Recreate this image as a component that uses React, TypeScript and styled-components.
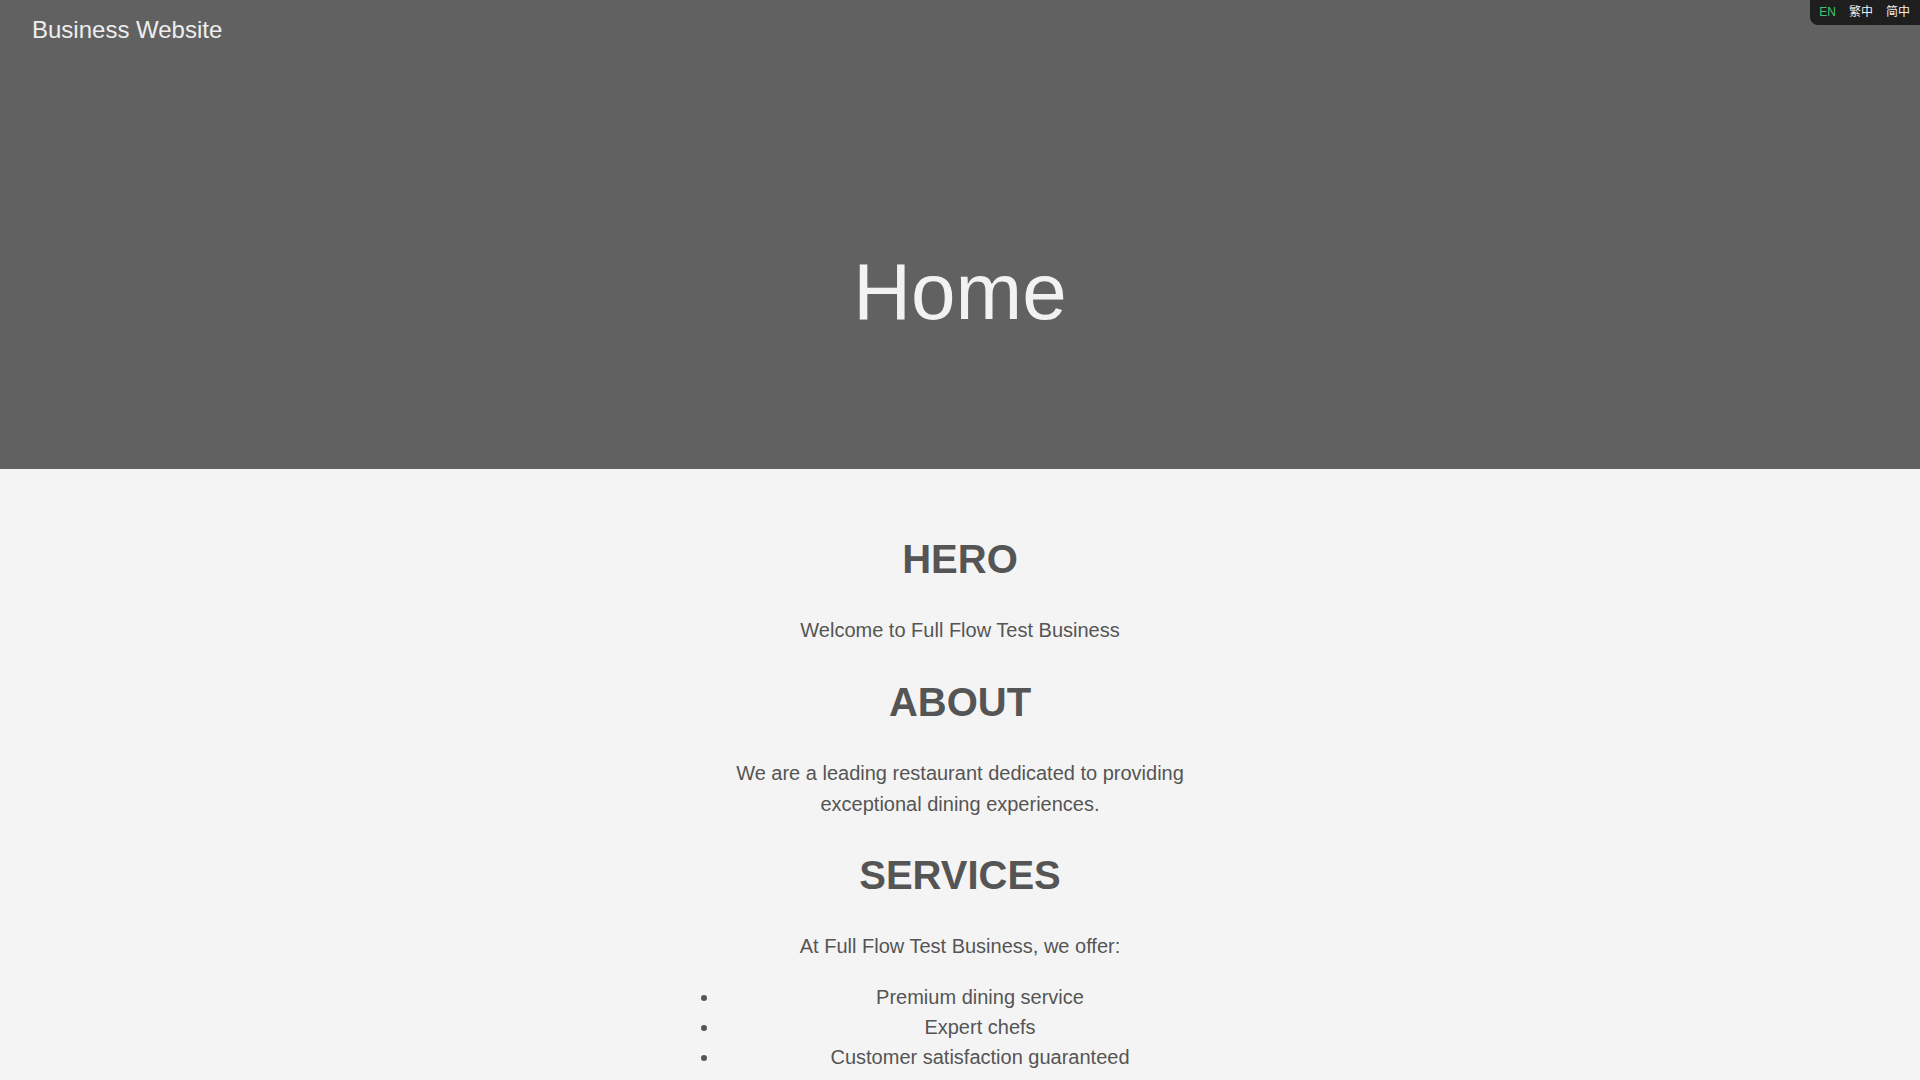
import React from "react";
import styled, { createGlobalStyle } from "styled-components";

const GlobalStyle = createGlobalStyle`
  html, body {
    margin: 0;
    padding: 0;
    background: #f4f4f4;
  }
  body {
    font-family: "Liberation Sans", Arial, "Noto Sans CJK SC", sans-serif;
    color: #555;
  }
`;

const Hero = styled.header`
  height: 469px;
  background: #616161;
  color: #f2f2f2;
  display: flex;
  flex-direction: column;
`;

const Brand = styled.div`
  padding: 16px 32px 0;
  font-size: 24px;
  line-height: 1.15;
  color: #eeeeee;
`;

const HeroTitle = styled.h1`
  margin: 202px 0 0;
  font-size: 80px;
  font-weight: 400;
  line-height: 1.15;
  text-align: center;
  color: #f2f2f2;
`;

const LangBar = styled.nav`
  position: fixed;
  top: 0;
  right: 0;
  display: flex;
  gap: 1px;
  padding: 4px 4px 4px 3px;
  background: #1e1e1e;
  border-bottom-left-radius: 8px;
`;

const LangButton = styled.button<{ $active?: boolean }>`
  border: 0;
  background: transparent;
  padding: 2px 6px;
  font-family: "Liberation Sans", Arial, "Noto Sans CJK SC", sans-serif;
  font-size: 12px;
  line-height: 13px;
  color: ${(p) => (p.$active ? "#3fc46e" : "#f0f0f0")};
  cursor: pointer;
`;

const Main = styled.main`
  max-width: 560px;
  margin: 0 auto;
  padding: 34px 0 40px;
  text-align: center;
  font-size: 20px;
  line-height: 1.52;
`;

const SectionTitle = styled.h2`
  margin: 0.83em 0;
  font-size: 40px;
  font-weight: 700;
  line-height: 1.15;
  color: #555;
`;

const Text = styled.p`
  max-width: 520px;
  margin: 20px auto;
`;

const List = styled.ul`
  margin: 20px 0;
  padding-left: 40px;
`;

const services = [
  "Premium dining service",
  "Expert chefs",
  "Customer satisfaction guaranteed",
];

export default function App() {
  return (
    <>
      <GlobalStyle />
      <Hero>
        <Brand>Business Website</Brand>
        <HeroTitle>Home</HeroTitle>
      </Hero>
      <LangBar>
        <LangButton $active>EN</LangButton>
        <LangButton>繁中</LangButton>
        <LangButton>简中</LangButton>
      </LangBar>
      <Main>
        <SectionTitle>HERO</SectionTitle>
        <Text>Welcome to Full Flow Test Business</Text>
        <SectionTitle>ABOUT</SectionTitle>
        <Text>
          We are a leading restaurant dedicated to providing exceptional dining
          experiences.
        </Text>
        <SectionTitle>SERVICES</SectionTitle>
        <Text>At Full Flow Test Business, we offer:</Text>
        <List>
          {services.map((s) => (
            <li key={s}>{s}</li>
          ))}
        </List>
      </Main>
    </>
  );
}
